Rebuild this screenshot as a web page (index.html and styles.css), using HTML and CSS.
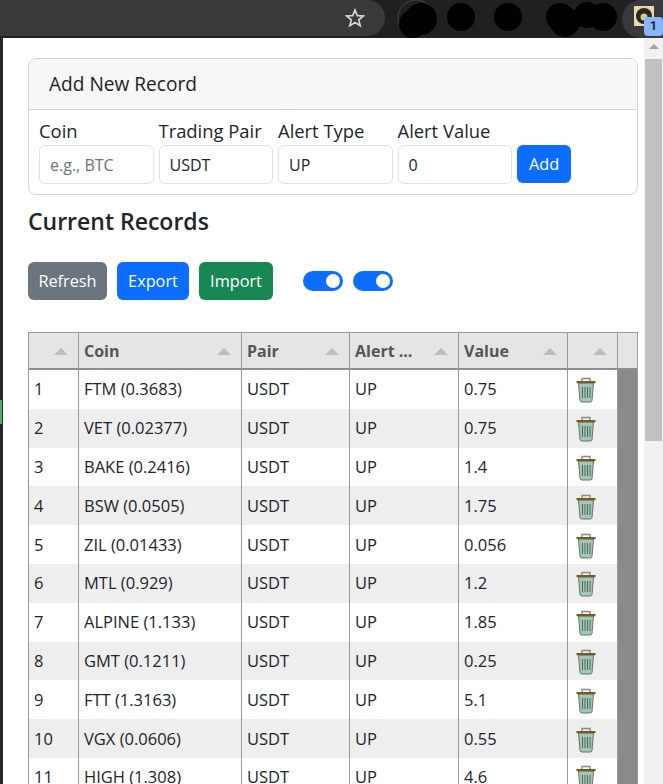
FILE: index.html
```html
<!DOCTYPE html>
<html lang="en">
<head>
    <meta charset="UTF-8">
    <meta name="viewport" content="width=device-width, initial-scale=1.0">
    <title>Price Alerts</title>
    <link rel="stylesheet" href="styles.css">
</head>
<body>

    <!-- Browser toolbar behind the popup -->
    <header class="toolbar">
        <div class="omnibox">
            <svg class="star" viewBox="0 0 20 20" width="20" height="20">
                <polygon points="10,2 12.3,7.6 18.3,8 13.7,11.9 15.2,17.8 10,14.6 4.8,17.8 6.3,11.9 1.7,8 7.7,7.6" fill="none" stroke="#d5d5d5" stroke-width="1.7"/>
            </svg>
        </div>
        <svg class="scribble" viewBox="0 0 237 38" width="237" height="38">
            <circle cx="31" cy="18" r="18" fill="none" stroke="#444" stroke-width="1"/>
            <circle cx="36" cy="19" r="16" fill="#000"/>
            <circle cx="28" cy="24" r="14" fill="#000"/>
            <circle cx="76" cy="17" r="14" fill="#000"/>
            <circle cx="123" cy="17" r="14" fill="#000"/>
            <rect x="171" y="31" width="14" height="3" fill="#8ab4f8"/>
            <circle cx="175" cy="17" r="14" fill="#000"/>
            <circle cx="180" cy="22" r="15" fill="#000"/>
            <circle cx="202" cy="15" r="13" fill="#000"/>
            <circle cx="218" cy="17" r="14" fill="#000"/>
        </svg>
        <div class="ext-button">
            <svg class="ext-icon" viewBox="0 0 20 20" width="20" height="20">
                <rect width="20" height="20" fill="#e8d6b0"/>
                <circle cx="10" cy="10" r="8" fill="#2b2622"/>
                <circle cx="10" cy="11" r="3.5" fill="#d9c69c"/>
            </svg>
            <span class="ext-badge">1</span>
        </div>
    </header>

    <div class="window">
        <div class="edge"><span class="edge-mark"></span></div>

        <main class="popup">
            <section class="card">
                <div class="card-header">Add New Record</div>
                <form class="card-body">
                    <div class="field">
                        <label for="coin">Coin</label>
                        <input type="text" id="coin" placeholder="e.g., BTC">
                    </div>
                    <div class="field">
                        <label for="pair">Trading Pair</label>
                        <input type="text" id="pair" value="USDT">
                    </div>
                    <div class="field">
                        <label for="alertType">Alert Type</label>
                        <input type="text" id="alertType" value="UP">
                    </div>
                    <div class="field">
                        <label for="alertValue">Alert Value</label>
                        <input type="text" id="alertValue" value="0">
                    </div>
                    <button type="button" class="btn btn-add btn-blue">Add</button>
                </form>
            </section>

            <h2>Current Records</h2>

            <div class="actions">
                <button type="button" class="btn btn-refresh btn-gray">Refresh</button>
                <button type="button" class="btn btn-export btn-blue">Export</button>
                <button type="button" class="btn btn-import btn-green">Import</button>
                <div class="switches">
                    <span class="switch"></span>
                    <span class="switch"></span>
                </div>
            </div>

            <div class="table-wrap">
                <table class="records">
                    <colgroup>
                        <col class="col-num">
                        <col class="col-coin">
                        <col class="col-pair">
                        <col class="col-type">
                        <col class="col-value">
                        <col class="col-del">
                        <col class="col-gutter">
                    </colgroup>
                    <thead>
                        <tr>
                            <th></th>
                            <th>Coin</th>
                            <th>Pair</th>
                            <th>Alert ...</th>
                            <th>Value</th>
                            <th></th>
                            <th class="no-sort"></th>
                        </tr>
                    </thead>
                    <tbody>
                        <tr><td>1</td><td>FTM (0.3683)</td><td>USDT</td><td>UP</td><td>0.75</td><td class="del"><svg class="trash" viewBox="0 0 20 26"><use href="#trash"/></svg></td><td class="gutter" rowspan="11"></td></tr>
                        <tr><td>2</td><td>VET (0.02377)</td><td>USDT</td><td>UP</td><td>0.75</td><td class="del"><svg class="trash" viewBox="0 0 20 26"><use href="#trash"/></svg></td></tr>
                        <tr><td>3</td><td>BAKE (0.2416)</td><td>USDT</td><td>UP</td><td>1.4</td><td class="del"><svg class="trash" viewBox="0 0 20 26"><use href="#trash"/></svg></td></tr>
                        <tr><td>4</td><td>BSW (0.0505)</td><td>USDT</td><td>UP</td><td>1.75</td><td class="del"><svg class="trash" viewBox="0 0 20 26"><use href="#trash"/></svg></td></tr>
                        <tr><td>5</td><td>ZIL (0.01433)</td><td>USDT</td><td>UP</td><td>0.056</td><td class="del"><svg class="trash" viewBox="0 0 20 26"><use href="#trash"/></svg></td></tr>
                        <tr><td>6</td><td>MTL (0.929)</td><td>USDT</td><td>UP</td><td>1.2</td><td class="del"><svg class="trash" viewBox="0 0 20 26"><use href="#trash"/></svg></td></tr>
                        <tr><td>7</td><td>ALPINE (1.133)</td><td>USDT</td><td>UP</td><td>1.85</td><td class="del"><svg class="trash" viewBox="0 0 20 26"><use href="#trash"/></svg></td></tr>
                        <tr><td>8</td><td>GMT (0.1211)</td><td>USDT</td><td>UP</td><td>0.25</td><td class="del"><svg class="trash" viewBox="0 0 20 26"><use href="#trash"/></svg></td></tr>
                        <tr><td>9</td><td>FTT (1.3163)</td><td>USDT</td><td>UP</td><td>5.1</td><td class="del"><svg class="trash" viewBox="0 0 20 26"><use href="#trash"/></svg></td></tr>
                        <tr><td>10</td><td>VGX (0.0606)</td><td>USDT</td><td>UP</td><td>0.55</td><td class="del"><svg class="trash" viewBox="0 0 20 26"><use href="#trash"/></svg></td></tr>
                        <tr><td>11</td><td>HIGH (1.308)</td><td>USDT</td><td>UP</td><td>4.6</td><td class="del"><svg class="trash" viewBox="0 0 20 26"><use href="#trash"/></svg></td></tr>
                    </tbody>
                </table>
            </div>
        </main>

        <!-- Scrollbar of the popup -->
        <div class="scrollbar">
            <span class="scroll-arrow"></span>
            <span class="scroll-thumb"></span>
        </div>
    </div>

    <svg class="sprite" width="0" height="0">
        <symbol id="trash" viewBox="0 0 20 26">
            <path d="M6 4 V1.5 H14 V4" fill="none" stroke="#8a8a80" stroke-width="1.4"/>
            <path d="M2.5 6 H17.5 L16 23.5 Q15.8 25 14 25 H6 Q4.2 25 4 23.5 Z" fill="#a0c8b4" stroke="#66766c" stroke-width="1"/>
            <rect x="0.5" y="4" width="19" height="2.2" fill="#7a5a1e"/>
            <path d="M6.5 10 V21 M9 10 V21 M11.5 10 V21 M14 10 V21" stroke="#4d5a53" stroke-width="0.9"/>
        </symbol>
    </svg>

</body>
</html>
```

FILE: styles.css
```css
/* Base Reset */
* {
    margin: 0;
    padding: 0;
    box-sizing: border-box;
}

body {
    font-family: 'Open Sans', 'Noto Sans', sans-serif;
    font-size: 16.5px;
    color: #212529;
    background: #fff;
    width: 663px;
    height: 784px;
    overflow: hidden;
}

/* Browser toolbar */
.toolbar {
    display: flex;
    height: 38px;
    background: #1f2022;
    overflow: hidden;
}

.omnibox {
    display: flex;
    align-items: center;
    justify-content: flex-end;
    width: 385px;
    height: 36px;
    padding-right: 20px;
    background: #39393b;
    border-radius: 0 18px 18px 0;
}

.scribble {
    display: block;
    flex: none;
}

.ext-button {
    position: relative;
    flex: none;
    width: 41px;
    height: 38px;
    background: #38393b;
    border-radius: 19px 0 0 19px;
}

.ext-icon {
    position: absolute;
    left: 12px;
    top: 6px;
}

.ext-badge {
    position: absolute;
    right: 0;
    top: 17px;
    width: 19px;
    height: 19px;
    border-radius: 4px;
    background: #8ab4f8;
    color: #16233a;
    font-family: 'Roboto', sans-serif;
    font-size: 12px;
    font-weight: 700;
    line-height: 19px;
    text-align: center;
}

/* Popup window */
.window {
    display: flex;
    height: 746px;
}

.edge {
    flex: none;
    width: 3px;
    background: #26272a;
    padding-top: 362px;
}

.edge-mark {
    display: block;
    width: 2px;
    height: 24px;
    background: #4caf62;
}

.popup {
    flex: none;
    width: 641px;
    padding: 20px 6px 0 25px;
    overflow: hidden;
}

.scrollbar {
    flex: none;
    width: 19px;
    background: #f1f1f1;
    display: flex;
    flex-direction: column;
    align-items: center;
}

.scroll-arrow {
    width: 0;
    height: 0;
    margin-top: 6px;
    border-left: 5px solid transparent;
    border-right: 5px solid transparent;
    border-bottom: 5px solid #a3a3a3;
}

.scroll-thumb {
    width: 17px;
    height: 382px;
    margin-top: 10px;
    background: #c1c1c1;
}

/* Add record card */
.card {
    border: 1px solid #d3d4d5;
    border-radius: 8px;
    overflow: hidden;
}

.card-header {
    height: 51px;
    padding-left: 20px;
    font-size: 19.1px;
    line-height: 51px;
    background: #f7f7f7;
    border-bottom: 1px solid #d3d4d5;
}

.card-body {
    display: flex;
    align-items: flex-end;
    gap: 5px;
    padding: 10px;
}

.field {
    width: 114.5px;
}

label {
    display: block;
    height: 25px;
    font-size: 18.4px;
    line-height: 22px;
}

input[type="text"] {
    display: block;
    width: 100%;
    height: 39px;
    padding: 0 10px;
    border: 1px solid #dee2e6;
    border-radius: 6px;
    font-family: inherit;
    font-size: 16px;
    color: #212529;
}

input::placeholder {
    color: #6c757d;
}

h2 {
    height: 67px;
    padding-top: 8px;
    font-size: 23px;
    font-weight: 600;
    line-height: 36px;
}

/* Buttons */
.btn {
    height: 38px;
    border: none;
    border-radius: 6px;
    color: #fff;
    font-family: inherit;
    font-size: 16.3px;
}

.btn-add { width: 54px; margin-bottom: 1px; }
.btn-refresh { width: 79px; }
.btn-export { width: 72px; }
.btn-import { width: 74px; }

.btn-blue { background-color: #0d6efd; }
.btn-gray { background-color: #6c757d; }
.btn-green { background-color: #198754; }

.actions {
    display: flex;
    align-items: center;
    gap: 10px;
    margin-bottom: 32px;
}

.switches {
    display: flex;
    gap: 10px;
    margin-left: 20px;
}

.switch {
    display: flex;
    justify-content: flex-end;
    align-items: center;
    width: 40px;
    height: 20px;
    padding-right: 3px;
    border-radius: 10px;
    background: #0d6efd;
}

.switch::after {
    content: "";
    width: 14px;
    height: 14px;
    border-radius: 50%;
    background: #fff;
}

/* Records table */
.table-wrap {
    width: 610px;
    border: 1px solid #999;
    border-bottom: none;
}

.records {
    width: 608px;
    table-layout: fixed;
    border-collapse: separate;
    border-spacing: 0;
}

.col-num { width: 50px; }
.col-coin { width: 163px; }
.col-pair { width: 108px; }
.col-type { width: 109px; }
.col-value { width: 109px; }
.col-del { width: 50px; }
.col-gutter { width: 19px; }

.records th {
    position: relative;
    height: 37px;
    padding: 1px 0 0 5px;
    background: #e5e5e5;
    border-right: 1px solid #999;
    border-bottom: 2px solid #8f8f8f;
    color: #555;
    font-size: 16px;
    font-weight: 700;
    text-align: left;
}

.records th:last-child {
    border-right: none;
}

/* sort arrow */
.records th::after {
    content: "";
    position: absolute;
    right: 10px;
    top: 15px;
    width: 0;
    height: 0;
    border-left: 7px solid transparent;
    border-right: 7px solid transparent;
    border-bottom: 7px solid #bdbdbd;
}

.records th.no-sort::after {
    display: none;
}

.records td {
    height: 38.8px;
    padding: 0 0 0 5px;
    border-right: 1px solid #999;
    line-height: 20px;
    white-space: nowrap;
    overflow: hidden;
}

.records tbody tr:nth-child(even) td {
    background: #eee;
}

.records td.gutter,
.records tbody tr:nth-child(even) td.gutter {
    background: #8a8a8a;
    border-right: none;
}

.records td.del {
    padding: 2px 0 0 8px;
}

.trash {
    display: block;
    width: 20px;
    height: 26px;
}

.sprite {
    position: absolute;
}
```
